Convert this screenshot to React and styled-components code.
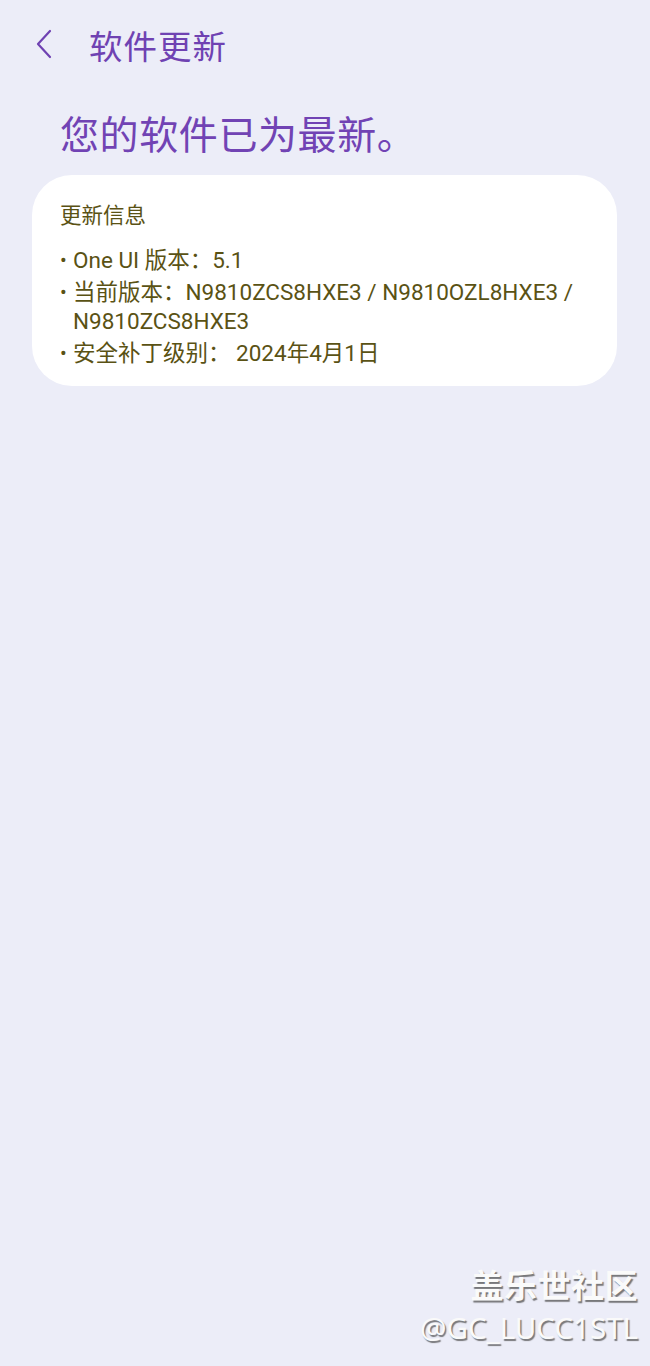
import React from "react";
import styled, { createGlobalStyle } from "styled-components";

const Global = createGlobalStyle`
  html, body { margin: 0; padding: 0; }
  body {
    background: #ecedf8;
    font-family: Roboto, "Noto Sans CJK SC", sans-serif;
  }
`;

const Page = styled.div`
  width: 650px;
  height: 1366px;
  background: #ecedf8;
  display: flex;
  flex-direction: column;
  position: relative;
  overflow: hidden;
`;

const TopBar = styled.div`
  display: flex;
  align-items: center;
  height: 46px;
  margin-top: 21px;
  padding-left: 32px;
  gap: 33px;
`;

const BackButton = styled.button`
  border: none;
  background: none;
  padding: 0;
  width: 24px;
  height: 32px;
  display: flex;
  align-items: center;
  justify-content: center;
  cursor: pointer;
`;

const BarTitle = styled.h1`
  margin: 0;
  font-size: 33.5px;
  font-weight: 400;
  color: #6f42b2;
  letter-spacing: 1px;
`;

const Headline = styled.h2`
  margin: 43px 0 0 60px;
  font-size: 39px;
  font-weight: 400;
  line-height: 52px;
  color: #7143b4;
  letter-spacing: 0.6px;
`;

const Card = styled.section`
  margin: 13px 33px 0 32px;
  background: #fff;
  border-radius: 40px;
  padding: 27px 28px 18px 28px;
  display: flex;
  flex-direction: column;
`;

const CardTitle = styled.div`
  font-size: 21.5px;
  line-height: 28px;
  color: #5a5214;
  margin-bottom: 16px;
`;

const List = styled.ul`
  margin: 0;
  padding: 0;
  list-style: none;
  display: flex;
  flex-direction: column;
  gap: 3px;
`;

const Item = styled.li`
  display: flex;
  font-size: 22.5px;
  line-height: 29px;
  color: #5a5214;
`;

const Bullet = styled.span`
  width: 13px;
  flex: none;
  font-size: 20px;
`;

const Watermark = styled.div`
  position: absolute;
  right: 12px;
  bottom: 18px;
  display: flex;
  flex-direction: column;
  align-items: flex-end;
  color: #fafafa;
  text-shadow: 1.5px 1.5px 1px rgba(80, 80, 80, 0.75);
`;

const MarkTitle = styled.div`
  font-size: 33px;
  font-weight: 700;
  line-height: 42px;
  letter-spacing: 0.5px;
`;

const MarkHandle = styled.div`
  font-family: "Noto Sans", Roboto, sans-serif;
  font-size: 29.5px;
  line-height: 40px;
`;

const items = [
  "One UI 版本：5.1",
  "当前版本：N9810ZCS8HXE3 / N9810OZL8HXE3 / N9810ZCS8HXE3",
  "安全补丁级别： 2024年4月1日",
];

export default function App() {
  return (
    <>
      <Global />
      <Page>
        <TopBar>
          <BackButton aria-label="返回">
            <svg width="18" height="30" viewBox="0 0 18 30">
              <path d="M15 2 L3 15 L15 28" fill="none" stroke="#6f42b2" strokeWidth="2.2" strokeLinecap="round" strokeLinejoin="round" />
            </svg>
          </BackButton>
          <BarTitle>软件更新</BarTitle>
        </TopBar>
        <Headline>您的软件已为最新。</Headline>
        <Card>
          <CardTitle>更新信息</CardTitle>
          <List>
            {items.map((t) => (
              <Item key={t}>
                <Bullet>•</Bullet>
                <span>{t}</span>
              </Item>
            ))}
          </List>
        </Card>
        <Watermark>
          <MarkTitle>盖乐世社区</MarkTitle>
          <MarkHandle>@GC_LUCC1STL</MarkHandle>
        </Watermark>
      </Page>
    </>
  );
}
